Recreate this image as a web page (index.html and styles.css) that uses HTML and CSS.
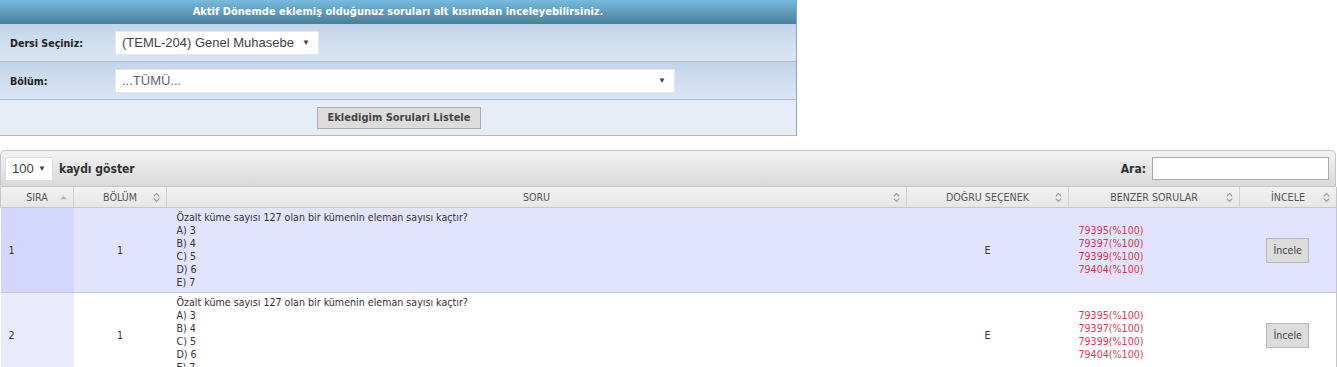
FILE: index.html
```html
<!DOCTYPE html>
<html lang="tr">
<head>
<meta charset="utf-8">
<title>Sorular</title>
<link rel="stylesheet" href="styles.css">
</head>
<body>
<div class="panel">
  <div class="panel-title">Aktif Dönemde eklemiş olduğunuz soruları alt kısımdan inceleyebilirsiniz.</div>
  <div class="form-row">
    <label class="form-label">Dersi Seçiniz:</label>
    <div class="select select-ders"><span>(TEML-204) Genel Muhasebe</span><span class="caret">▼</span></div>
  </div>
  <div class="form-row">
    <label class="form-label">Bölüm:</label>
    <div class="select select-bolum"><span class="muted">...TÜMÜ...</span><span class="caret">▼</span></div>
  </div>
  <div class="button-row">
    <button class="btn">Ekledigim Sorulari Listele</button>
  </div>
</div>

<div class="grid">
  <div class="toolbar">
    <div class="length">
      <div class="select select-len"><span>100</span><span class="caret">▼</span></div>
      <span class="tb-label">kaydı göster</span>
    </div>
    <div class="filter">
      <span class="tb-label">Ara:</span>
      <div class="search"></div>
    </div>
  </div>
  <table class="data">
    <colgroup>
      <col class="c-sira"><col class="c-bolum"><col class="c-soru"><col class="c-dogru"><col class="c-benzer"><col class="c-incele">
    </colgroup>
    <thead>
      <tr>
        <th><span class="th-in">SIRA<svg class="sort" viewBox="0 0 8 10"><path d="M1 6.5 L4 3.5 L7 6.5 Z" fill="#b5b5b5"/></svg></span></th>
        <th><span class="th-in">BÖLÜM<svg class="sort" viewBox="0 0 8 10"><path d="M1.5 4 L4 1.5 L6.5 4 M1.5 6 L4 8.5 L6.5 6" fill="none" stroke="#999" stroke-width="1"/></svg></span></th>
        <th><span class="th-in">SORU<svg class="sort" viewBox="0 0 8 10"><path d="M1.5 4 L4 1.5 L6.5 4 M1.5 6 L4 8.5 L6.5 6" fill="none" stroke="#999" stroke-width="1"/></svg></span></th>
        <th><span class="th-in">DOĞRU SEÇENEK<svg class="sort" viewBox="0 0 8 10"><path d="M1.5 4 L4 1.5 L6.5 4 M1.5 6 L4 8.5 L6.5 6" fill="none" stroke="#999" stroke-width="1"/></svg></span></th>
        <th><span class="th-in">BENZER SORULAR<svg class="sort" viewBox="0 0 8 10"><path d="M1.5 4 L4 1.5 L6.5 4 M1.5 6 L4 8.5 L6.5 6" fill="none" stroke="#999" stroke-width="1"/></svg></span></th>
        <th><span class="th-in">İNCELE<svg class="sort" viewBox="0 0 8 10"><path d="M1.5 4 L4 1.5 L6.5 4 M1.5 6 L4 8.5 L6.5 6" fill="none" stroke="#999" stroke-width="1"/></svg></span></th>
      </tr>
    </thead>
    <tbody>
      <tr class="odd">
        <td class="sorted">1</td>
        <td class="center">1</td>
        <td class="soru">Özalt küme sayısı 127 olan bir kümenin eleman sayısı kaçtır?<br>A) 3<br>B) 4<br>C) 5<br>D) 6<br>E) 7</td>
        <td class="center">E</td>
        <td class="benzer">79395(%100)<br>79397(%100)<br>79399(%100)<br>79404(%100)</td>
        <td class="center"><button class="btn-small">İncele</button></td>
      </tr>
      <tr class="even">
        <td class="sorted">2</td>
        <td class="center">1</td>
        <td class="soru">Özalt küme sayısı 127 olan bir kümenin eleman sayısı kaçtır?<br>A) 3<br>B) 4<br>C) 5<br>D) 6<br>E) 7</td>
        <td class="center">E</td>
        <td class="benzer">79395(%100)<br>79397(%100)<br>79399(%100)<br>79404(%100)</td>
        <td class="center"><button class="btn-small">İncele</button></td>
      </tr>
    </tbody>
  </table>
</div>
</body>
</html>
```

FILE: styles.css
```css
body {
  margin: 0;
  font-family: "DejaVu Sans Condensed", "DejaVu Sans", sans-serif;
  font-size: 10.6px;
  color: #333;
  background: #fff;
}

.panel {
  width: 796px;
  border-right: 1px solid #8ea6bd;
  border-bottom: 1px solid #a8bccf;
}

.panel-title {
  height: 24px;
  line-height: 24px;
  background: linear-gradient(#76badf, #4b7f98);
  color: #fff;
  font-weight: bold;
  font-size: 11px;
  text-align: center;
}

.form-row {
  display: flex;
  align-items: center;
  height: 37px;
  border-bottom: 1px solid #a8bccf;
  background: linear-gradient(#c3d4ea, #dbe6f3);
}

.form-label {
  width: 115px;
  padding-left: 10px;
  box-sizing: border-box;
  font-weight: bold;
  color: #222;
}

.select {
  box-sizing: border-box;
  height: 24px;
  background: #fff;
  border: 1px solid #e2e6ee;
  display: flex;
  align-items: center;
  justify-content: space-between;
  padding: 0 8px 0 6px;
  font-family: "Liberation Sans", Arial, sans-serif;
  font-size: 13px;
  color: #444;
}

.select .caret {
  font-size: 8px;
  color: #444;
}

.select .muted {
  color: #666;
}

.select-ders { width: 204px; }
.select-bolum { width: 560px; }

.button-row {
  height: 35px;
  display: flex;
  justify-content: center;
  align-items: center;
  background: #e6edf6;
}

.btn {
  height: 22px;
  width: 164px;
  padding: 0;
  background: #dcdcdc;
  border: 1px solid #ababab;
  font-family: inherit;
  font-size: 11px;
  font-weight: bold;
  color: #444;
  margin-left: 2px;
}

.grid {
  margin-top: 14px;
  width: 1336px;
}

.toolbar {
  box-sizing: border-box;
  height: 37px;
  display: flex;
  align-items: center;
  justify-content: space-between;
  padding: 0 6px 0 4px;
  background: linear-gradient(#f3f3f3, #d9d9d9);
  border: 1px solid #c6c6c6;
  border-radius: 5px 5px 0 0;
}

.length, .filter {
  display: flex;
  align-items: center;
  gap: 6px;
}

.select-len {
  width: 48px;
  padding: 0 6px 0 6px;
  border-color: #ddd;
}

.tb-label {
  font-weight: bold;
  font-size: 12px;
  color: #333;
}

.search {
  width: 177px;
  height: 23px;
  box-sizing: border-box;
  background: #fff;
  border: 1px solid #aaa;
}

.data {
  width: 1336px;
  border-collapse: collapse;
  table-layout: fixed;
}

.c-sira { width: 73px; }
.c-bolum { width: 93px; }
.c-soru { width: 740px; }
.c-dogru { width: 162px; }
.c-benzer { width: 171px; }
.c-incele { width: 97px; }

.data th {
  height: 20px;
  padding: 0;
  background: linear-gradient(#f2f2f2, #e6e6e6);
  border-left: 1px solid #d2d2d2;
  border-bottom: 1px solid #c8c8c8;
  font-weight: normal;
  color: #555;
  font-size: 10.6px;
}

.data th:first-child { border-left: 1px solid #c6c6c6; }
.data th:last-child { border-right: 1px solid #c6c6c6; }

.th-in {
  display: flex;
  justify-content: center;
  align-items: center;
  position: relative;
}

.sort {
  position: absolute;
  right: 5px;
  top: 50%;
  width: 9px;
  height: 11px;
  margin-top: -5.5px;
}

.data td {
  padding: 3px 8px;
  vertical-align: middle;
  line-height: 13px;
  border-bottom: 1px solid #c8c8c8;
}

.data tr.odd td { background: #e2e4ff; }
.data tr.odd td.sorted { background: #d3d6ff; }
.data tr.even td { background: #fff; }
.data tr.even td.sorted { background: #eaebff; }

.data td.sorted { padding-left: 8px; }
.data td.center { text-align: center; }
.data td.soru { padding-left: 10px; }
.data td.benzer { padding-left: 10px; color: #e0384e; }
.data tr td:last-child { border-right: 1px solid #c6c6c6; }

.btn-small {
  height: 25px;
  width: 43px;
  padding: 0;
  background: #dcdcdc;
  border: 1px solid #b8b8b8;
  font-family: inherit;
  font-size: 10.6px;
  color: #444;
}
```
